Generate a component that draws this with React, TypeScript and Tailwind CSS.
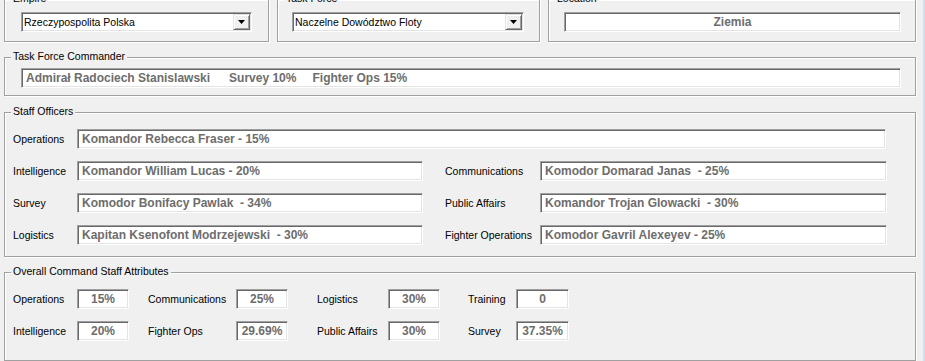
import * as React from "react";

const FONT = "font-['Liberation_Sans',Arial,sans-serif]";
const SUNKEN =
  "border border-t-[#a0a0a0] border-l-[#a0a0a0] border-b-white border-r-white bg-white shadow-[inset_1px_1px_0_#696969,inset_-1px_-1px_0_#e3e3e3]";

function Group({
  title,
  className = "",
  children,
}: {
  title?: string;
  className?: string;
  children: React.ReactNode;
}) {
  return (
    <div
      className={`relative border border-[#a0a0a0] shadow-[inset_1px_1px_0_#fff,1px_1px_0_#fff] ${className}`}
    >
      {title && (
        <span className="absolute left-[6px] top-[-8px] bg-[#f0f0f0] px-[2px] text-[10.5px] leading-[13px] text-black">
          {title}
        </span>
      )}
      {children}
    </div>
  );
}

function Combo({ value, width }: { value: string; width: string }) {
  return (
    <div className={`flex h-[20px] items-center ${SUNKEN} ${width}`}>
      <span className="flex-1 truncate pl-[2px] text-[10.5px] leading-[14px] text-black">
        {value}
      </span>
      <div className="mr-[1px] flex h-[16px] w-[17px] items-center justify-center border border-t-[#e3e3e3] border-l-[#e3e3e3] border-b-[#696969] border-r-[#696969] bg-[#f0f0f0] shadow-[inset_1px_1px_0_#fff,inset_-1px_-1px_0_#a0a0a0]">
        <svg width="7" height="4" viewBox="0 0 7 4">
          <polygon points="0,0 7,0 3.5,4" fill="#000" />
        </svg>
      </div>
    </div>
  );
}

function Field({
  children,
  width,
  center = false,
}: {
  children: React.ReactNode;
  width: string;
  center?: boolean;
}) {
  return (
    <div
      className={`flex h-[20px] items-center ${SUNKEN} ${width} ${
        center ? "justify-center" : "pl-[4px]"
      }`}
    >
      <span className="whitespace-pre text-[12px] font-bold leading-[16px] text-[#6d6d6d]">
        {children}
      </span>
    </div>
  );
}

function Label({ children, width }: { children: React.ReactNode; width: string }) {
  return (
    <span className={`shrink-0 text-[10.5px] leading-[14px] text-black ${width}`}>
      {children}
    </span>
  );
}

const staffRows = [
  {
    left: ["Intelligence", "Komandor William Lucas - 20%"],
    right: ["Communications", "Komodor Domarad Janas  - 25%"],
  },
  {
    left: ["Survey", "Komodor Bonifacy Pawlak  - 34%"],
    right: ["Public Affairs", "Komandor Trojan Glowacki  - 30%"],
  },
  {
    left: ["Logistics", "Kapitan Ksenofont Modrzejewski  - 30%"],
    right: ["Fighter Operations", "Komodor Gavril Alexeyev - 25%"],
  },
];

const attrRows = [
  [
    ["Operations", "15%"],
    ["Communications", "25%"],
    ["Logistics", "30%"],
    ["Training", "0"],
  ],
  [
    ["Intelligence", "20%"],
    ["Fighter Ops", "29.69%"],
    ["Public Affairs", "30%"],
    ["Survey", "37.35%"],
  ],
];

// label widths / gaps for the four attribute columns
const ATTR_COLS = [
  { gap: "", label: "w-[64px]", box: "w-[52px]" },
  { gap: "ml-[19px]", label: "w-[88px]", box: "w-[52px]" },
  { gap: "ml-[29px]", label: "w-[71px]", box: "w-[52px]" },
  { gap: "ml-[28px]", label: "w-[48px]", box: "w-[53px]" },
];

export default function App() {
  return (
    <div className={`flex h-[361px] w-[925px] overflow-hidden bg-[#f0f0f0] ${FONT}`}>
      <div className="flex w-[923px] flex-col pl-[4px]">
        {/* top row */}
        <div className="mt-[-1px] flex gap-[8px]">
          <Group title="Empire" className="h-[43px] w-[265px] pl-[16px] pt-[12px]">
            <Combo value="Rzeczypospolita Polska" width="w-[231px]" />
          </Group>
          <Group title="Task Force" className="h-[43px] w-[263px] pl-[14px] pt-[12px]">
            <Combo value="Naczelne Dowództwo Floty" width="w-[232px]" />
          </Group>
          <Group title="Location" className="h-[43px] w-[368px] pl-[15px] pt-[12px]">
            <Field width="w-[337px]" center>
              Ziemia
            </Field>
          </Group>
        </div>

        <Group
          title="Task Force Commander"
          className="mt-[15px] h-[39px] w-[912px] pl-[16px] pt-[10px]"
        >
          <Field width="w-[880px]">
            Admirał Radociech Stanislawski
            <span className="ml-[19px]">Survey 10%</span>
            <span className="ml-[16px]">Fighter Ops 15%</span>
          </Field>
        </Group>

        <Group
          title="Staff Officers"
          className="mt-[16px] flex h-[145px] w-[912px] flex-col gap-[12px] pl-[8px] pt-[16px]"
        >
          <div className="flex items-center">
            <Label width="w-[64px]">Operations</Label>
            <Field width="w-[809px]">Komandor Rebecca Fraser - 15%</Field>
          </div>
          {staffRows.map((row) => (
            <div key={row.left[0]} className="flex items-center">
              <Label width="w-[64px]">{row.left[0]}</Label>
              <Field width="w-[346px]">{row.left[1]}</Field>
              <span className="ml-[22px]" />
              <Label width="w-[95px]">{row.right[0]}</Label>
              <Field width="w-[347px]">{row.right[1]}</Field>
            </div>
          ))}
        </Group>

        <Group
          title="Overall Command Staff Attributes"
          className="mt-[15px] flex h-[89px] w-[912px] flex-col gap-[12px] pl-[8px] pt-[16px]"
        >
          {attrRows.map((row, r) => (
            <div key={r} className="flex items-center">
              {row.map(([label, value], i) => (
                <React.Fragment key={label}>
                  <Label width={`${ATTR_COLS[i].label} ${ATTR_COLS[i].gap}`}>{label}</Label>
                  <Field width={ATTR_COLS[i].box} center>
                    {value}
                  </Field>
                </React.Fragment>
              ))}
            </div>
          ))}
        </Group>
      </div>
      <div className="h-full w-[2px] bg-[#cddff3]" />
    </div>
  );
}
